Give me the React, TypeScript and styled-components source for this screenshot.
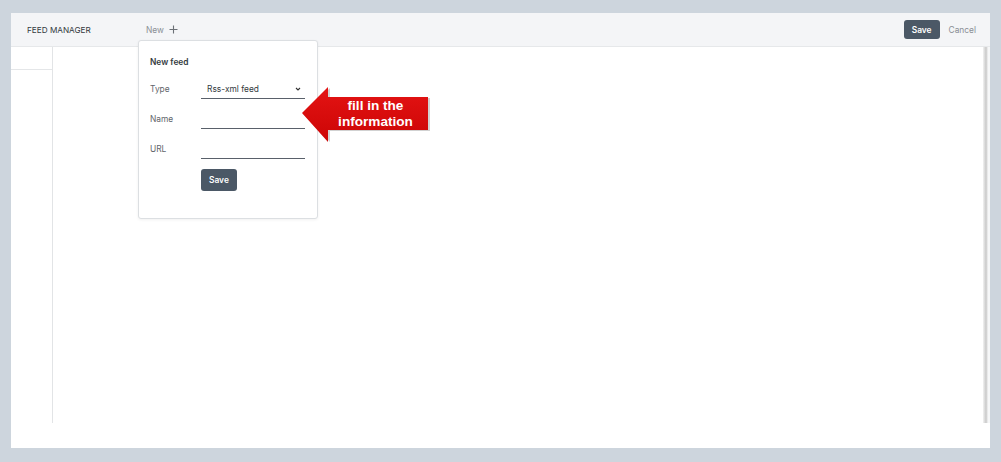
import styled, { createGlobalStyle } from 'styled-components';

const GlobalStyle = createGlobalStyle`
  html, body {
    margin: 0;
    padding: 0;
    background: #cdd5dd;
    font-family: 'Inter', 'Liberation Sans', sans-serif;
  }
`;

const Page = styled.div`
  width: 1001px;
  height: 462px;
  padding: 13px 11px 14px 11px;
  box-sizing: border-box;
`;

const Window = styled.div`
  position: relative;
  width: 979px;
  height: 435px;
  background: #ffffff;
  display: flex;
  flex-direction: column;
`;

const Header = styled.div`
  height: 34px;
  flex: none;
  box-sizing: border-box;
  background: #f4f5f7;
  border-bottom: 1px solid #e6e8ea;
  display: flex;
  align-items: center;
  padding: 0 14px 0 16px;
`;

const Title = styled.div`
  width: 119px;
  font-size: 8.2px;
  color: #333a40;
`;

const NewButton = styled.button`
  background: transparent;
  border: none;
  padding: 0;
  display: flex;
  align-items: center;
  gap: 5px;
  font-family: inherit;
  font-size: 8.4px;
  color: #8a8f95;
  cursor: pointer;
`;

const Spacer = styled.div`
  flex: 1;
`;

const Actions = styled.div`
  display: flex;
  align-items: center;
  gap: 9px;
`;

const PrimaryButton = styled.button<{ h: number }>`
  height: ${({ h }) => h}px;
  padding: 0 8px;
  border: none;
  border-radius: 3px;
  background: #4b5866;
  color: #ffffff;
  font-family: inherit;
  font-size: 8.4px;
  font-weight: 600;
  cursor: pointer;
`;

const LinkButton = styled.button`
  background: transparent;
  border: none;
  padding: 0;
  font-family: inherit;
  font-size: 8.4px;
  color: #8a8f95;
`;

const Body = styled.div`
  flex: 1;
  display: flex;
  min-height: 0;
`;

const Sidebar = styled.div`
  width: 41px;
  flex: none;
  border-right: 1px solid #e2e4e6;
`;

const SidebarCell = styled.div`
  height: 22px;
  border-bottom: 1px solid #e4e6e8;
`;

const Main = styled.div`
  flex: 1;
  background: #ffffff;
`;

const Rail = styled.div`
  width: 7px;
  flex: none;
  background: linear-gradient(to right, #f2f2f2 0, #c9c9c9 3px, #dcdcdc 4px, #f6f7f8 5px, #f6f7f8 7px);
`;

const Footer = styled.div`
  height: 25px;
  flex: none;
  background: #ffffff;
`;

const Popover = styled.div`
  position: absolute;
  left: 127px;
  top: 27px;
  width: 180px;
  height: 179px;
  box-sizing: border-box;
  background: #ffffff;
  border: 1px solid #dcdfe2;
  border-radius: 3px;
  box-shadow: 0 1px 3px rgba(0, 0, 0, 0.06);
  padding: 16px 11px;
`;

const PopoverTitle = styled.div`
  font-size: 8.4px;
  font-weight: 600;
  color: #333a40;
  margin-bottom: 12px;
`;

const Form = styled.div`
  display: grid;
  grid-template-columns: 51px 104px;
  row-gap: 10px;
  align-items: center;
`;

const Label = styled.div`
  font-size: 8.4px;
  color: #5f656b;
`;

const Field = styled.div`
  height: 20px;
  box-sizing: border-box;
  border-bottom: 1px solid #59606a;
  display: flex;
  align-items: center;
  justify-content: space-between;
  padding: 0 4px 0 6px;
  font-size: 8.4px;
  color: #333a40;
`;

const FormActions = styled.div`
  display: flex;
  grid-column: 2;
`;

const Callout = styled.div`
  position: absolute;
  left: 289px;
  top: 72px;
  width: 131px;
  height: 60px;
`;

const CalloutText = styled.div`
  position: absolute;
  left: 28px;
  top: 12px;
  width: 95px;
  height: 33px;
  display: flex;
  flex-direction: column;
  align-items: center;
  justify-content: center;
  font-family: 'Liberation Sans', Arial, sans-serif;
  font-weight: 700;
  font-size: 13.6px;
  line-height: 16px;
  color: #ffffff;
`;

function Plus() {
  return (
    <svg width="9" height="9" viewBox="0 0 9 9">
      <path d="M4.5 0.5v8M0.5 4.5h8" stroke="#6b7076" strokeWidth="1.1" fill="none" />
    </svg>
  );
}

function Chevron() {
  return (
    <svg width="6" height="4" viewBox="0 0 6 4">
      <path d="M1 1l2 2 2-2" stroke="#333" strokeWidth="1.1" fill="none" />
    </svg>
  );
}

function ArrowShape() {
  return (
    <svg width="131" height="60" viewBox="0 0 131 60" style={{ position: 'absolute', left: 0, top: 0 }}>
      <defs>
        <linearGradient id="red" x1="0" y1="0" x2="0" y2="1">
          <stop offset="0" stopColor="#e41414" />
          <stop offset="1" stopColor="#cc0505" />
        </linearGradient>
      </defs>
      <polygon points="14,42 41,16 41,26 141,26 141,59 41,59 41,70" fill="rgba(0,0,0,0.18)" transform="translate(-11,-13)" />
      <polygon points="2,41 28,15 28,25 128,25 128,58 28,58 28,70" fill="url(#red)" transform="translate(0,-13)" />
    </svg>
  );
}

export default function App() {
  return (
    <>
      <GlobalStyle />
      <Page>
        <Window>
          <Header>
            <Title>FEED MANAGER</Title>
            <NewButton>
              New <Plus />
            </NewButton>
            <Spacer />
            <Actions>
              <PrimaryButton h={19}>Save</PrimaryButton>
              <LinkButton>Cancel</LinkButton>
            </Actions>
          </Header>

          <Body>
            <Sidebar>
              <SidebarCell />
            </Sidebar>
            <Main />
            <Rail />
          </Body>
          <Footer />

          {/* Popup de novo feed */}
          <Popover>
            <PopoverTitle>New feed</PopoverTitle>
            <Form>
              <Label>Type</Label>
              <Field>
                Rss-xml feed <Chevron />
              </Field>
              <Label>Name</Label>
              <Field />
              <Label>URL</Label>
              <Field />
              <FormActions>
                <PrimaryButton h={22}>Save</PrimaryButton>
              </FormActions>
            </Form>
          </Popover>

          <Callout>
            <ArrowShape />
            <CalloutText>
              <span>fill in the</span>
              <span>information</span>
            </CalloutText>
          </Callout>
        </Window>
      </Page>
    </>
  );
}
